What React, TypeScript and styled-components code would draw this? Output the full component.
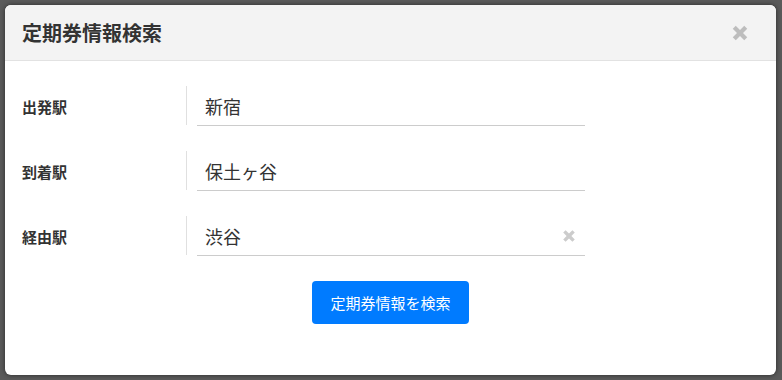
import React, { useState } from "react";
import styled, { createGlobalStyle } from "styled-components";

const GlobalStyle = createGlobalStyle`
  html, body {
    margin: 0;
    padding: 0;
    background: #5a5a5a;
    font-family: "Noto Sans CJK JP", "Noto Sans", sans-serif;
    color: #333;
  }
`;

const Overlay = styled.div`
  width: 782px;
  height: 380px;
  padding: 5px 6px 5px 5px;
  box-sizing: border-box;
`;

const Modal = styled.div`
  width: 771px;
  height: 370px;
  background: #fff;
  border-radius: 6px;
  box-shadow: 0 0 5px rgba(0, 0, 0, 0.55);
  overflow: hidden;
  display: flex;
  flex-direction: column;
`;

const Header = styled.div`
  height: 55px;
  background: #f3f3f3;
  border-bottom: 1px solid #e2e2e2;
  display: flex;
  align-items: center;
  justify-content: space-between;
  padding: 0 26px 0 17px;
`;

const Title = styled.h1`
  margin: 0;
  font-size: 20px;
  font-weight: 700;
  color: #333;
  letter-spacing: 0;
`;

const CloseButton = styled.button`
  border: 0;
  background: none;
  padding: 0;
  display: flex;
  cursor: pointer;
  color: ${(props) => props.color || "#bdbdbd"};
`;

const Body = styled.div`
  padding: 25px 17px 0;
  display: flex;
  flex-direction: column;
  gap: 25px;
`;

const Row = styled.div`
  display: flex;
  align-items: stretch;
  height: 40px;
`;

const Label = styled.label`
  width: 164px;
  display: flex;
  align-items: center;
  font-size: 15px;
  font-weight: 700;
  color: #333;
`;

const Divider = styled.div`
  width: 1px;
  height: 39px;
  background: #e0e0e0;
`;

const Field = styled.div`
  margin-left: 10px;
  width: 388px;
  border-bottom: 1px solid #cccccc;
  display: flex;
  align-items: center;
  padding: 0 8px;
  box-sizing: border-box;
`;

const Input = styled.input`
  flex: 1;
  border: 0;
  outline: none;
  background: transparent;
  font-family: inherit;
  font-size: 18px;
  color: #333;
  padding: 0;
  min-width: 0;
`;

const Footer = styled.div`
  display: flex;
  justify-content: center;
`;

const SearchButton = styled.button`
  width: 157px;
  height: 43px;
  border: 0;
  border-radius: 4px;
  background: #007bff;
  color: #fff;
  font-family: inherit;
  font-size: 15px;
  cursor: pointer;
`;

function Times({ size }: { size: number }) {
  return (
    <svg width={size} height={size} viewBox="0 0 16 16">
      <path
        d="M2.2 4.6 L4.6 2.2 L8 5.6 L11.4 2.2 L13.8 4.6 L10.4 8 L13.8 11.4 L11.4 13.8 L8 10.4 L4.6 13.8 L2.2 11.4 L5.6 8 Z"
        fill="currentColor"
      />
    </svg>
  );
}

export default function App() {
  const [fields, setFields] = useState({
    from: "新宿",
    to: "保土ヶ谷",
    via: "渋谷",
  });

  return (
    <Overlay>
      <GlobalStyle />
      <Modal>
        <Header>
          <Title>定期券情報検索</Title>
          <CloseButton>
            <Times size={20} />
          </CloseButton>
        </Header>

        <Body>
          <Row>
            <Label>出発駅</Label>
            <Divider />
            <Field>
              <Input
                value={fields.from}
                onChange={(e) => setFields({ ...fields, from: e.target.value })}
              />
            </Field>
          </Row>

          <Row>
            <Label>到着駅</Label>
            <Divider />
            <Field>
              <Input
                value={fields.to}
                onChange={(e) => setFields({ ...fields, to: e.target.value })}
              />
            </Field>
          </Row>

          <Row>
            <Label>経由駅</Label>
            <Divider />
            <Field>
              <Input
                value={fields.via}
                onChange={(e) => setFields({ ...fields, via: e.target.value })}
              />
              <CloseButton color="#cccccc" onClick={() => setFields({ ...fields, via: "" })}>
                <Times size={16} />
              </CloseButton>
            </Field>
          </Row>

          <Footer>
            <SearchButton>定期券情報を検索</SearchButton>
          </Footer>
        </Body>
      </Modal>
    </Overlay>
  );
}
